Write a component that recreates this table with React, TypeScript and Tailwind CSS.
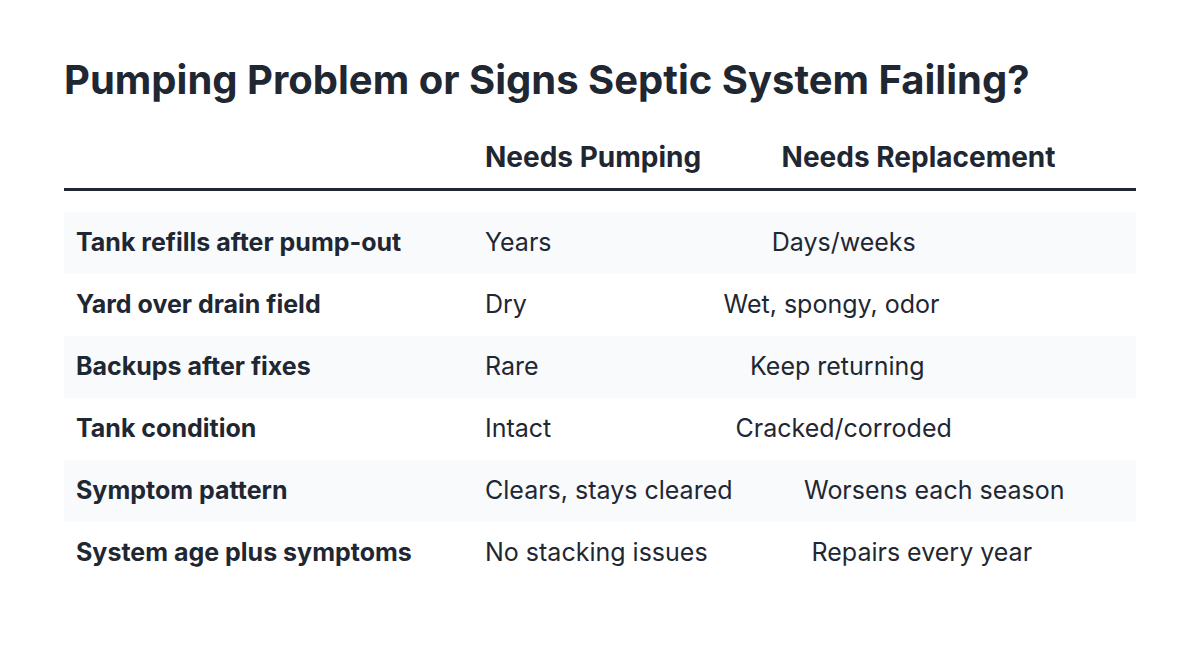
const rows = [
  { label: "Tank refills after pump-out", pumping: "Years", replacement: "Days/weeks" },
  { label: "Yard over drain field", pumping: "Dry", replacement: "Wet, spongy, odor" },
  { label: "Backups after fixes", pumping: "Rare", replacement: "Keep returning" },
  { label: "Tank condition", pumping: "Intact", replacement: "Cracked/corroded" },
  { label: "Symptom pattern", pumping: "Clears, stays cleared", replacement: "Worsens each season" },
  { label: "System age plus symptoms", pumping: "No stacking issues", replacement: "Repairs every year" },
];

const App = () => {
  return (
    <div className="min-h-[658px] bg-white px-16 pt-[56px] text-[#1f2733] [font-family:Inter,'Liberation_Sans',sans-serif]">
      <h1 className="text-[40px] leading-[48px] font-bold">
        Pumping Problem or Signs Septic System Failing?
      </h1>

      <div className="mt-[22px] flex h-[65px] items-center border-b-[3px] border-[#1f2731] text-[28px] font-bold">
        <div className="w-[409px] px-3" />
        <div className="px-3">Needs Pumping</div>
        <div className="flex-1 pr-6 pl-3 text-center">Needs Replacement</div>
      </div>

      <div className="mt-[21px]">
        {rows.map((row, i) => (
          <div
            key={row.label}
            className={`flex h-[62px] items-center text-[25px] ${i % 2 === 0 ? "bg-[#f8fafc]" : "bg-white"}`}
          >
            <div className="w-[409px] px-3 font-bold">{row.label}</div>
            <div className="px-3">{row.pumping}</div>
            <div className="flex-1 pr-6 pl-3 text-center">{row.replacement}</div>
          </div>
        ))}
      </div>
    </div>
  );
};

export default App;
